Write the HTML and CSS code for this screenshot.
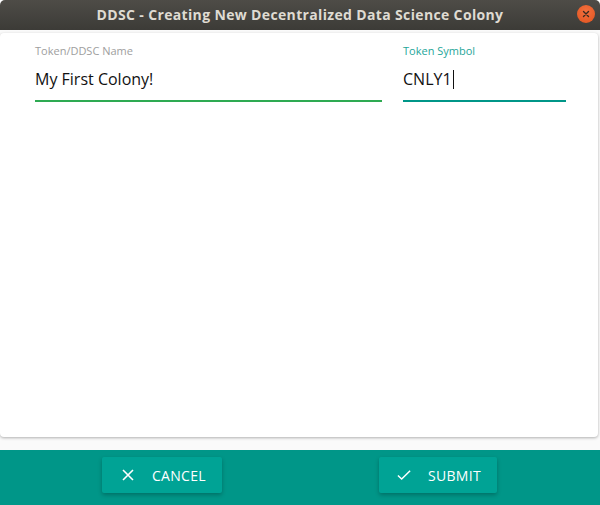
FILE: index.html
```html
<!DOCTYPE html>
<html>
<head>
<meta charset="utf-8">
<link rel="stylesheet" href="styles.css">
</head>
<body>
<div class="window">
  <header class="titlebar">
    <span class="title">DDSC - Creating New Decentralized Data Science Colony</span>
    <span class="close"><svg width="10" height="10" viewBox="0 0 10 10"><path d="M2.5 2.5L7.5 7.5M7.5 2.5L2.5 7.5" stroke="#3a2a20" stroke-width="1.4" stroke-linecap="round"/></svg></span>
  </header>
  <main class="content">
    <section class="card">
      <div class="field name">
        <label class="label">Token/DDSC Name</label>
        <div class="value">My First Colony!</div>
      </div>
      <div class="field symbol">
        <label class="label">Token Symbol</label>
        <div class="value">CNLY1<span class="caret"></span></div>
      </div>
    </section>
  </main>
  <footer class="footer">
    <button class="btn cancel"><svg width="12" height="12" viewBox="0 0 12 12"><path d="M1 1L11 11M11 1L1 11" stroke="#fff" stroke-width="1.6"/></svg><span>CANCEL</span></button>
    <button class="btn submit"><svg width="15" height="12" viewBox="0 0 15 12"><path d="M1 6.5L5 10.3L14 1.5" fill="none" stroke="#fff" stroke-width="1.6"/></svg><span>SUBMIT</span></button>
  </footer>
</div>
</body>
</html>
```
FILE: styles.css
```css
* { box-sizing: border-box; }
html, body { margin: 0; padding: 0; }
body {
  width: 600px;
  height: 505px;
  overflow: hidden;
  font-family: "Open Sans", "DejaVu Sans", sans-serif;
  background: #ffffff;
}
.window {
  display: flex;
  flex-direction: column;
  height: 505px;
}
.titlebar {
  height: 30px;
  flex: none;
  display: flex;
  align-items: center;
  justify-content: center;
  position: relative;
  background: linear-gradient(#4e4c47, #3c3b37);
  border-radius: 5px 5px 0 0;
}
.title {
  color: #dfdbd2;
  font-weight: bold;
  font-size: 14px;
  letter-spacing: 0.35px;
  margin-top: -2px;
}
.close {
  position: absolute;
  right: 5px;
  top: 5px;
  width: 18px;
  height: 18px;
  border-radius: 50%;
  background: radial-gradient(circle at 50% 35%, #f3703e, #e0531f);
  display: flex;
  align-items: center;
  justify-content: center;
}
.content {
  flex: 1;
  padding: 3px 2px 13px 0;
  background: #fafafa;
  display: flex;
}
.card {
  flex: 1;
  background: #fff;
  border-radius: 4px;
  box-shadow: 0 1px 3px rgba(0,0,0,0.3);
  display: flex;
  align-items: flex-start;
  padding: 10px 32px 0 35px;
  gap: 21px;
}
.field {
  display: flex;
  flex-direction: column;
}
.field.name { width: 347px; }
.field.symbol { width: 163px; }
.label {
  font-size: 11px;
  color: #9e9e9e;
  line-height: 15px;
  height: 15px;
}
.symbol .label { color: #26a69a; }
.value {
  font-size: 16px;
  color: #111;
  height: 44px;
  padding-top: 10px;
  line-height: 22px;
  border-bottom: 2px solid #2eaa52;
  display: flex;
  align-items: flex-start;
}
.symbol .value { border-bottom-color: #009688; }
.caret {
  display: inline-block;
  width: 1px;
  height: 19px;
  background: #111;
  margin-top: 2px;
  margin-left: 1px;
}
.footer {
  height: 55px;
  flex: none;
  background: #009688;
  display: flex;
  align-items: flex-start;
  padding-top: 7px;
  padding-left: 102px;
}
.btn {
  height: 36px;
  border: none;
  border-radius: 2px;
  background: #00a395;
  color: #fff;
  font-family: "Open Sans", "DejaVu Sans", sans-serif;
  font-size: 14px;
  letter-spacing: 0.3px;
  display: flex;
  align-items: center;
  box-shadow: 0 2px 4px rgba(0,0,0,0.25);
  padding: 0 16px 0 20px;
}
.btn span { margin-left: 18px; }
.submit svg { margin-left: -2px; }
.submit span { margin-left: 17px; }
.cancel { width: 120px; }
.submit { width: 118px; margin-left: 157px; }
```
